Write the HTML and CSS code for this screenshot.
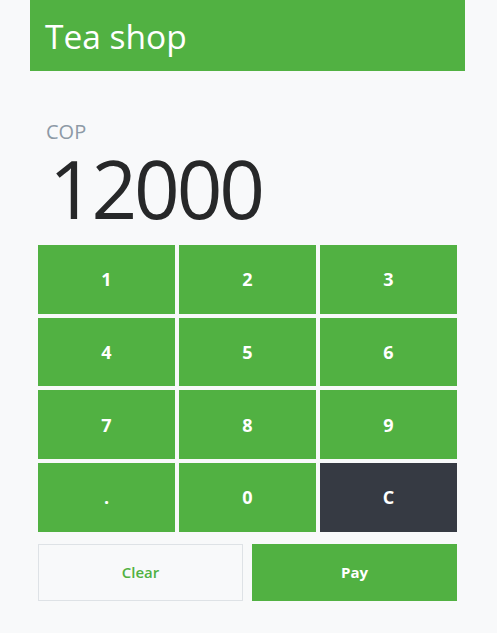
FILE: index.html
```html
<!DOCTYPE html>
<html>
<head>
<meta charset="utf-8">
<link rel="stylesheet" href="styles.css">
</head>
<body>
<div class="app">
  <header class="topbar"><h1 class="title">Tea shop</h1></header>
  <section class="display">
    <div class="currency">COP</div>
    <div class="amount">12000</div>
  </section>
  <div class="keypad">
    <button class="key">1</button>
    <button class="key">2</button>
    <button class="key">3</button>
    <button class="key">4</button>
    <button class="key">5</button>
    <button class="key">6</button>
    <button class="key">7</button>
    <button class="key">8</button>
    <button class="key">9</button>
    <button class="key">.</button>
    <button class="key">0</button>
    <button class="key key-dark">C</button>
  </div>
  <div class="actions">
    <button class="btn btn-outline">Clear</button>
    <button class="btn btn-primary">Pay</button>
  </div>
</div>
</body>
</html>
```
FILE: styles.css
```css
* { box-sizing: border-box; }
html, body { margin: 0; padding: 0; }
body {
  background: #f8f9fa;
  font-family: "Open Sans", "Noto Sans", sans-serif;
  color: #212529;
}
.app {
  width: 435px;
  margin-left: 30px;
}
.topbar {
  height: 71px;
  background: #51b142;
  display: flex;
  align-items: center;
  padding-left: 15px;
}
.title {
  margin: 0;
  font-size: 33.5px;
  font-weight: 400;
  color: #fff;
}
.display {
  padding: 47px 8px 0 16px;
}
.currency {
  font-size: 20px;
  line-height: 27px;
  color: #8d9aa6;
}
.amount {
  font-size: 80px;
  font-weight: 400;
  letter-spacing: -3.2px;
  line-height: 80px;
  margin-top: 3px;
  padding-left: 3px;
  color: #272829;
}
.keypad {
  margin-top: 17px;
  padding: 0 8px;
  display: grid;
  grid-template-columns: repeat(3, 1fr);
  grid-auto-rows: 68.7px;
  gap: 4px;
}
.key {
  border: 0;
  margin: 0;
  background: #51b142;
  color: #fff;
  font-family: inherit;
  font-size: 18px;
  font-weight: 700;
  padding: 0;
}
.key-dark { background: #363a43; }
.actions {
  margin-top: 12px;
  padding: 0 8px;
  display: grid;
  grid-template-columns: 1fr 1fr;
  gap: 9px;
}
.btn {
  height: 57px;
  margin: 0;
  font-family: inherit;
  font-size: 15px;
  padding: 0;
}
.btn-outline {
  background: #f8f9fa;
  border: 1px solid #dee2e6;
  color: #51b142;
  font-weight: 600;
}
.btn-primary {
  background: #51b142;
  border: 0;
  color: #fff;
  font-weight: 700;
}
```
